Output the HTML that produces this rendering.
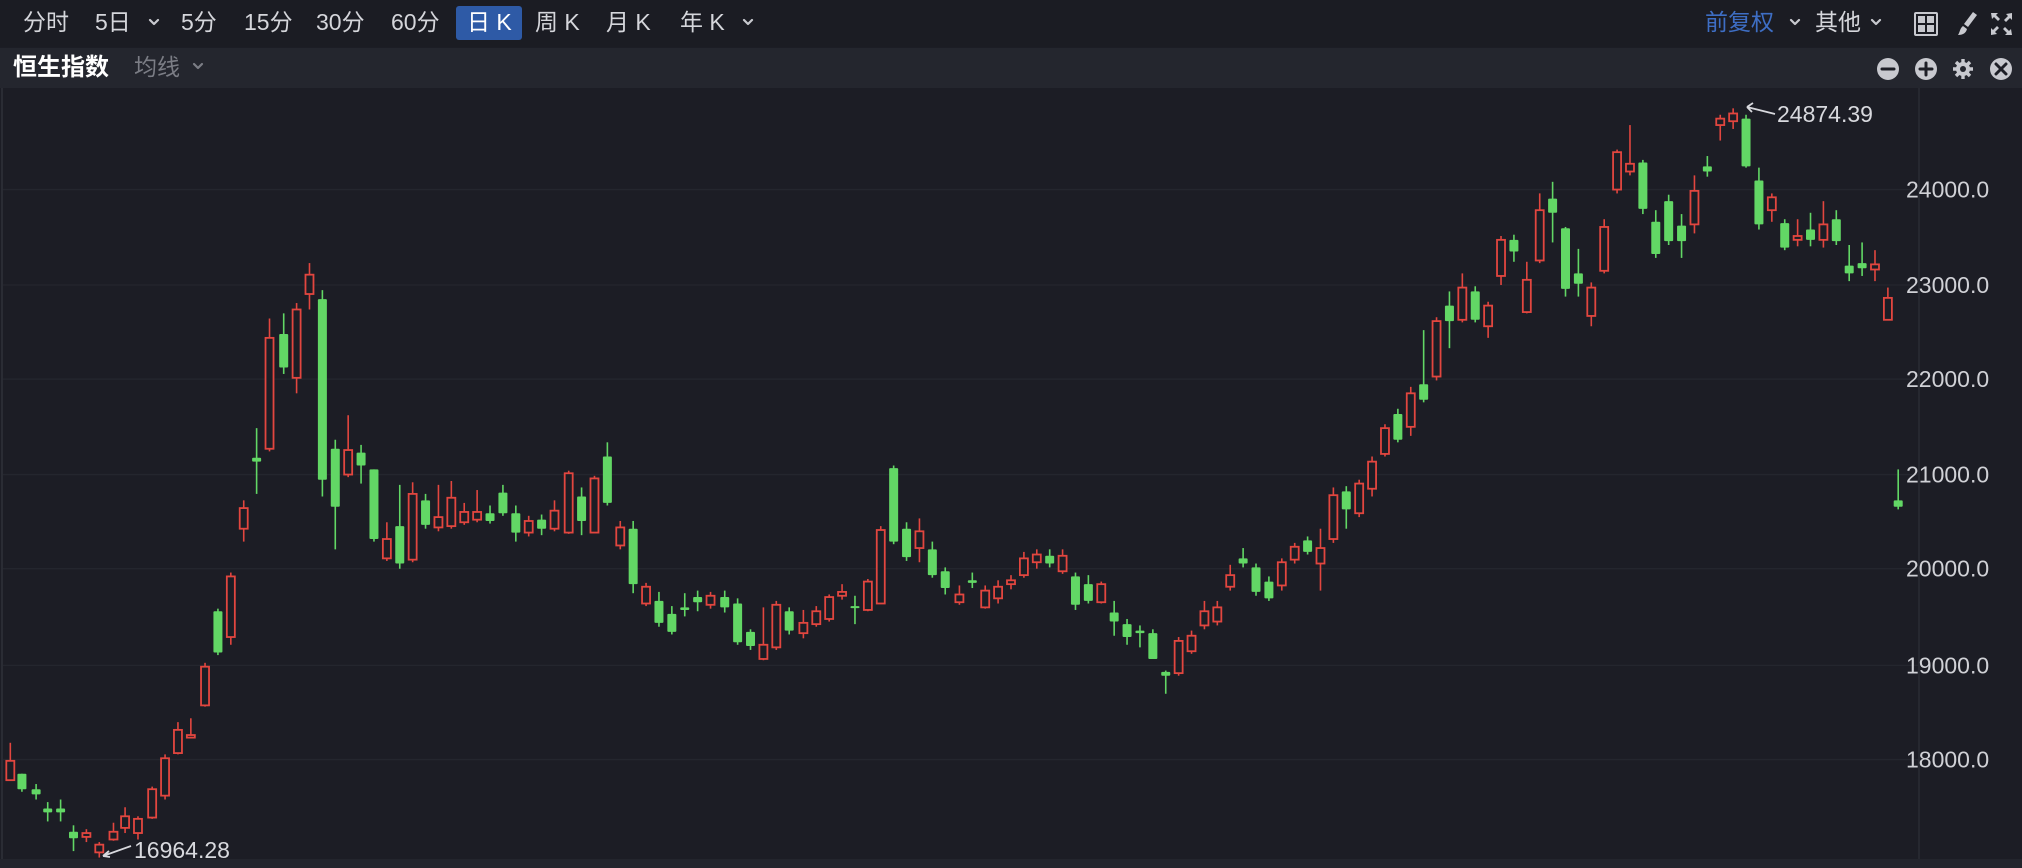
<!DOCTYPE html>
<html><head><meta charset="utf-8">
<style>
html,body{margin:0;padding:0;width:2022px;height:868px;overflow:hidden;background:#1c1d25;font-family:"Liberation Sans","Noto Sans CJK SC",sans-serif;}
.top{position:absolute;left:0;top:0;width:2022px;height:47px;background:#1b1c23;}
.sub{position:absolute;left:0;top:48px;width:2022px;height:40px;background:#24262e;}
.t{position:absolute;color:#d5d6db;font-size:23px;line-height:23px;top:11px;white-space:nowrap;}
.act{position:absolute;left:456px;top:6px;width:66px;height:34px;background:#2e5aa6;border-radius:3px;}
svg{position:absolute;left:0;top:0;}
</style></head><body>
<div class="top"></div>
<div class="sub"></div>
<div class="act"></div>
<div class="t" style="left:23px">分时</div>
<div class="t" style="left:95px">5日</div>
<div class="t" style="left:181px">5分</div>
<div class="t" style="left:244px">15分</div>
<div class="t" style="left:316px">30分</div>
<div class="t" style="left:391px">60分</div>
<div class="t" style="left:467px;color:#fff">日 K</div>
<div class="t" style="left:535px">周 K</div>
<div class="t" style="left:606px">月 K</div>
<div class="t" style="left:680px">年 K</div>
<div class="t" style="left:1705px;color:#3e6ec4">前复权</div>
<div class="t" style="left:1815px">其他</div>
<div class="t" style="left:13px;top:56px;color:#fff;font-weight:bold;font-size:24px">恒生指数</div>
<div class="t" style="left:134px;top:56px;color:#7b7d85">均线</div>
<svg width="2022" height="868" xmlns="http://www.w3.org/2000/svg" id="s">
<g fill="none" stroke="#c8c9cf" stroke-width="2.2" stroke-linecap="round" stroke-linejoin="round">
<path d="M150 20l4 4 4-4M744 20l4 4 4-4M1791 20l4 4 4-4M1872 20l4 4 4-4"/>
<path d="M194 64l4 4 4-4" stroke="#7b7d85"/>
</g>
<g fill="#c8c9cf">
<rect x="1915" y="13" width="22" height="22" rx="1" fill="none" stroke="#c8c9cf" stroke-width="2"/>
<rect x="1918" y="16" width="7" height="7"/><rect x="1927" y="16" width="7" height="7"/><rect x="1918" y="25" width="7" height="7"/><rect x="1927" y="25" width="7" height="7"/>
<path d="M1973 12l4 3-9 12-4-3z"/><path d="M1963 26l4 3c-1 4-4 6-9 6 2-3 2-7 5-9z"/>
<path d="M1991 13h7l-2 2 4 4-2 2-4-4-2 2zM2012 13v7l-2-2-4 4-2-2 4-4-2-2zM1991 35v-7l2 2 4-4 2 2-4 4 2 2zM2012 35h-7l2-2-4-4 2-2 4 4 2-2z"/>
<circle cx="1888" cy="69" r="11"/><circle cx="1926" cy="69" r="11"/><circle cx="2001" cy="69" r="11"/>
<circle cx="1963" cy="69" r="7"/>
</g>
<g stroke="#1e1f27" stroke-width="3" stroke-linecap="round">
<path d="M1882 69h12M1920 69h12M1926 63v12M1996 64l10 10M2006 64l-10 10"/>
</g>
<g stroke="#c8c9cf" stroke-width="3.4">
<path d="M1963 59v20M1953 69h20M1956 62l14 14M1970 62l-14 14"/>
</g>
<circle cx="1963" cy="69" r="3" fill="#24262e"/>
<line x1="1919" y1="88" x2="1919" y2="860" stroke="#2a2c34" stroke-width="1.5"/>
<line x1="2" y1="88" x2="2" y2="860" stroke="#2a2c34" stroke-width="2"/>
<rect x="0" y="859" width="2022" height="9" fill="#23252d"/>
<g id="grid" stroke="#24262e" stroke-width="1.3"></g>
<g id="lbl" fill="#d0d1d6" font-size="23" font-family="Liberation Sans, sans-serif"></g>
<g id="c"></g>
<g stroke="#d8d9de" stroke-width="1.8" fill="none">
<path d="M1775 114l-28 -7M1747 107l6 -4M1747 107l5 5"/>
<path d="M131 846l-28 10M103 856l6 -5M103 856l7 1"/>
</g>
<text x="1777" y="122" fill="#d8d9de" font-size="23" font-family="Liberation Sans, sans-serif">24874.39</text>
<text x="134" y="858" fill="#d8d9de" font-size="23" font-family="Liberation Sans, sans-serif">16964.28</text>
</svg>
<script>
var k=2022/1568;
var ns="http://www.w3.org/2000/svg";
var g=document.getElementById('grid'),l=document.getElementById('lbl');
[[24000,147],[23000,221],[22000,294],[21000,368],[20000,441],[19000,516],[18000,589]].forEach(function(p){
var y=p[1]*k;var ln=document.createElementNS(ns,'line');ln.setAttribute('x1',3);ln.setAttribute('x2',1918);ln.setAttribute('y1',y);ln.setAttribute('y2',y);g.appendChild(ln);
var t=document.createElementNS(ns,'text');t.setAttribute('x',1906);t.setAttribute('y',y+8);t.textContent=p[0]+'.0';l.appendChild(t);});
var d=`8 r 590 605 576 605
17 g 600 612 600 614
28 g 612 616 608 620
37 g 627 630 622 637
47 g 627 630 620 637
57 g 645 650 640 660
67 r 646 649 643 653
77 r 655 661 653 665
88 r 645 651 638 652
97 r 633 642 626 646
107 r 635 646 633 651
118 r 612 634 610 635
128 r 588 617 585 620
138 r 566 584 560 585
148 r 570 572 557 572
159 r 517 547 514 548
169 g 474 506 472 508
179 r 447 494 444 500
189 r 394 410 388 420
199 g 355 358 332 383
209 r 262 348 247 350
220 g 259 285 243 290
230 r 240 293 235 305
240 r 213 228 204 240
250 g 232 372 225 385
260 g 348 393 341 426
270 r 349 368 322 370
280 g 351 361 345 375
290 g 364 418 364 420
300 r 418 433 405 435
310 g 408 437 376 441
320 r 383 434 374 436
330 g 388 407 383 410
340 r 401 409 376 412
350 r 386 408 373 410
360 r 397 405 390 407
370 r 397 403 380 405
380 g 398 404 392 406
390 g 382 398 376 400
400 g 398 413 392 420
410 r 404 413 400 416
420 g 403 410 399 415
430 r 396 410 388 412
441 r 367 413 365 414
451 g 385 404 378 415
461 r 371 413 369 413
471 g 354 390 343 392
481 r 409 423 404 426
491 g 410 453 404 460
501 r 455 468 452 470
511 g 466 483 459 486
521 g 476 490 470 492
531 g 471 473 460 478
541 g 463 467 458 474
551 r 462 469 459 472
562 g 463 471 458 475
572 g 468 498 464 500
582 g 490 501 488 504
592 r 500 511 471 512
602 r 469 502 466 504
612 g 474 489 471 492
623 r 483 491 473 495
633 r 474 484 470 486
643 r 463 480 461 482
653 r 459 462 453 465
663 g 470 471 462 484
673 r 451 473 449 474
683 r 411 468 408 468
693 g 363 420 361 422
703 g 410 432 405 435
713 r 412 425 402 436
723 g 426 446 420 448
733 g 443 456 440 461
744 r 461 467 454 469
754 g 450 452 444 456
764 r 458 471 454 472
774 r 455 464 450 468
784 r 450 453 446 457
794 r 433 446 428 448
804 r 430 436 426 441
814 g 431 437 426 440
824 r 431 443 426 445
834 g 447 469 444 473
844 g 453 466 446 468
854 r 453 467 451 468
864 g 475 482 466 493
874 g 484 494 480 500
884 g 489 491 485 502
894 g 491 511 488 511
904 g 521 524 520 538
914 r 497 522 494 524
924 r 493 505 489 507
934 r 474 485 466 488
944 r 471 482 466 485
954 r 446 455 438 458
964 g 433 437 425 440
974 g 440 459 437 462
984 g 451 464 447 466
994 r 436 454 433 458
1004 r 424 434 421 437
1014 g 419 428 416 430
1024 r 425 437 410 458
1034 r 384 418 378 421
1044 g 381 395 377 410
1054 r 375 398 372 401
1064 r 358 379 354 385
1074 r 332 352 329 354
1084 g 321 341 317 343
1094 r 305 331 300 338
1104 g 298 310 256 312
1114 r 249 292 246 295
1124 g 237 249 226 270
1134 r 223 248 212 250
1144 g 226 248 222 250
1154 r 237 253 234 262
1164 r 186 214 183 221
1174 g 186 195 182 203
1184 r 217 242 203 243
1194 r 163 202 150 204
1204 g 154 165 141 188
1214 g 177 224 176 230
1224 g 212 220 193 230
1234 r 223 245 219 253
1244 r 176 210 170 212
1254 r 118 147 116 150
1264 r 127 133 97 136
1274 g 126 162 124 166
1284 g 172 197 163 200
1294 g 156 187 151 190
1304 g 175 187 166 200
1314 r 148 174 136 181
1324 g 129 133 121 137
1334 r 92 97 89 109
1344 r 88 94 84 100
1354 g 92 129 89 130
1364 g 140 174 130 178
1374 r 153 163 150 172
1384 g 173 192 170 194
1394 r 183 186 170 191
1404 g 178 186 165 191
1414 r 174 186 156 192
1424 g 170 187 163 190
1434 g 206 212 190 218
1444 g 204 208 188 214
1454 r 205 209 194 218
1464 r 231 248 223 248
1472 g 388 393 364 395`;
var c=document.getElementById('c'),h='';
d.split('\n').forEach(function(r){var a=r.trim().split(/\s+/);var x=+a[0]*k,t=+a[2]*k,b=+a[3]*k,wt=+a[4]*k,wb=+a[5]*k;
var red=a[1]=='r';var col=red?'#e2463f':'#62d765';
if(b-t<2){b=t+2;}
h+='<line x1="'+x+'" x2="'+x+'" y1="'+wt+'" y2="'+wb+'" stroke="'+col+'" stroke-width="1.6"/>';
if(red)h+='<rect x="'+(x-4)+'" y="'+t+'" width="8" height="'+(b-t)+'" fill="#1c1d25" stroke="'+col+'" stroke-width="1.8"/>';
else h+='<rect x="'+(x-4.5)+'" y="'+t+'" width="9" height="'+(b-t)+'" fill="'+col+'" rx="1"/>';});
c.innerHTML=h;
</script>
</body></html>
